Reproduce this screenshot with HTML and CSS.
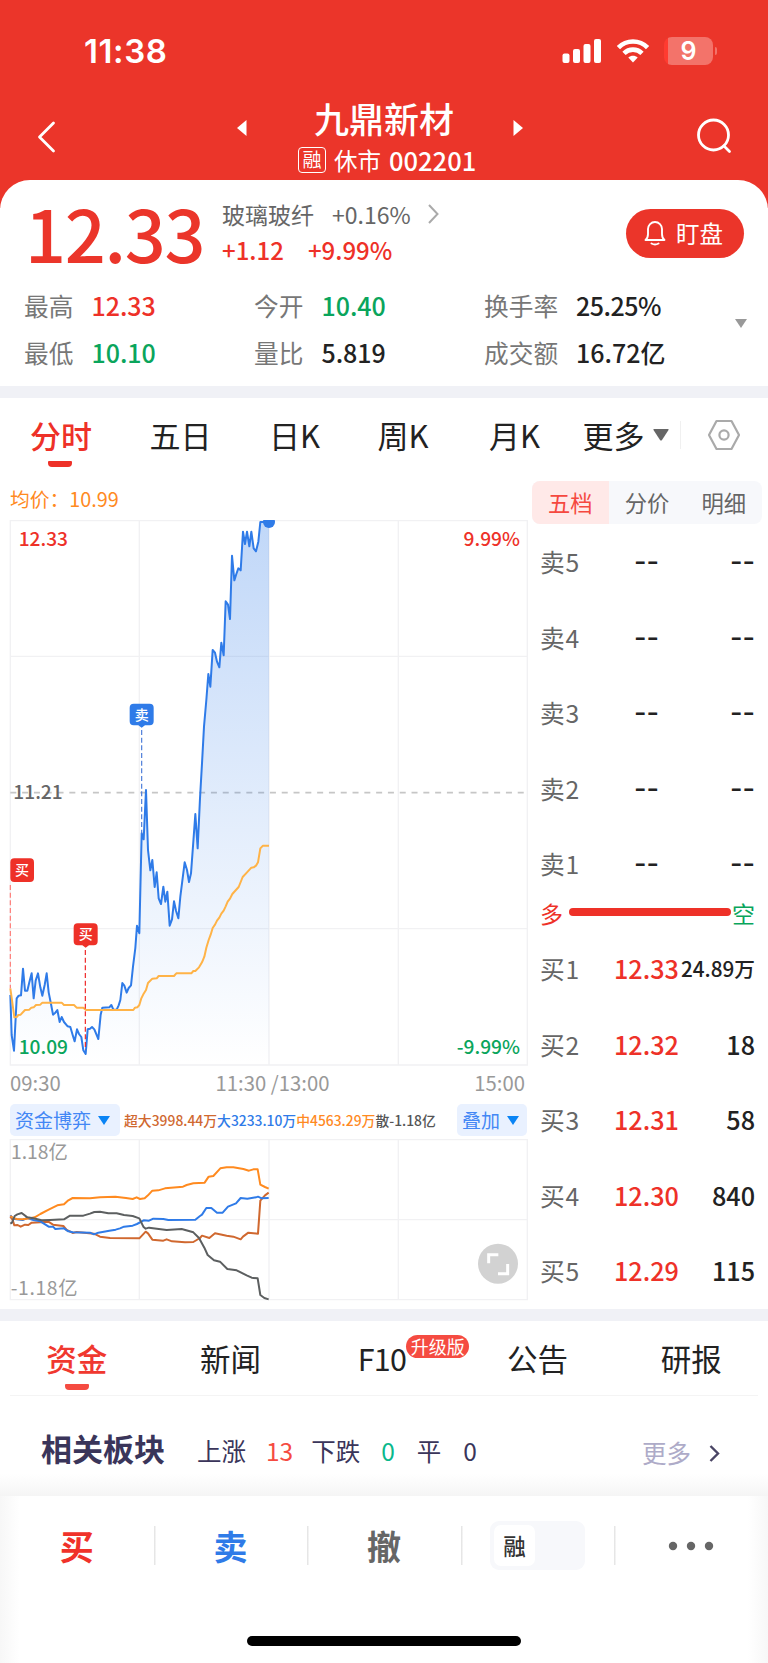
FILE: index.html
```html
<!DOCTYPE html>
<html lang="zh-CN">
<head>
  <meta charset="UTF-8">
  <meta name="viewport" content="width=device-width, initial-scale=1.0">
  <title>九鼎新材 002201</title>
  <link rel="stylesheet" href="styles.css">
</head>
<body>
  <header class="header">
    <div class="status">
      <span class="clock">11:38</span>
      <div class="status-icons">
        <svg width="40" height="26" viewBox="0 0 40 26" fill="#fff">
          <rect x="0.5" y="15.5" width="7" height="9.5" rx="2"/>
          <rect x="11" y="11" width="7" height="14" rx="2"/>
          <rect x="21.5" y="6" width="7" height="19" rx="2"/>
          <rect x="32" y="1" width="7" height="24" rx="2"/>
        </svg>
        <svg width="34" height="26" viewBox="0 0 34 26" fill="none" stroke="#fff" stroke-width="4.6">
          <path d="M2.4 9.6 C10.5 1.4 23.5 1.4 31.6 9.6"/>
          <path d="M8 15.4 C13 10.4 21 10.4 26 15.4"/>
          <path d="M17 24.5 L12.3 19.6 C15 17.2 19 17.2 21.7 19.6 Z" fill="#fff" stroke="none"/>
        </svg>
        <div class="battery">9</div>
      </div>
    </div>
    <div class="nav">
      <svg class="back" width="20" height="34" viewBox="0 0 20 34" fill="none" stroke="#fff" stroke-width="2.8" stroke-linecap="round" stroke-linejoin="round">
        <path d="M17.5 3 L3.5 17 L17.5 31"/>
      </svg>
      <svg class="prev" width="10" height="16" viewBox="0 0 10 16" fill="#fff"><path d="M9.5 0 V16 L0 8 Z"/></svg>
      <div class="title">
        <h1>九鼎新材</h1>
        <div class="subtitle"><span class="margin-tag">融</span><span class="market">休市</span><span class="code">002201</span></div>
      </div>
      <svg class="next" width="10" height="16" viewBox="0 0 10 16" fill="#fff"><path d="M0.5 0 V16 L10 8 Z"/></svg>
      <svg class="search" width="36" height="36" viewBox="0 0 36 36" fill="none" stroke="#fff" stroke-width="2.8" stroke-linecap="round">
        <circle cx="17.5" cy="17" r="15"/>
        <path d="M28 28 L33.5 33.5"/>
      </svg>
    </div>
  </header>

  <section class="quote">
    <div class="quote-top">
      <div class="price">12.33</div>
      <div class="change">
        <div class="sector">
          <span class="sector-name">玻璃玻纤</span><span class="sector-pct">+0.16%</span>
          <svg width="11" height="20" viewBox="0 0 11 20" fill="none" stroke="#aaa" stroke-width="2"><path d="M1 1 L9.5 10 L1 19"/></svg>
        </div>
        <div class="diff"><span>+1.12</span><span>+9.99%</span></div>
      </div>
      <button class="watch">
        <svg width="22" height="26" viewBox="0 0 22 26" fill="none" stroke="#fff" stroke-width="1.9" stroke-linecap="round" stroke-linejoin="round">
          <path d="M1.5 20 C3.5 18.5 4 16.5 4 14 V9 A7 7 0 0 1 18 9 V14 C18 16.5 18.5 18.5 20.5 20 Z"/>
          <path d="M7.5 23.5 Q11 25.5 14.5 23.5"/>
        </svg>
        <span>盯盘</span>
      </button>
    </div>
    <div class="stats">
      <div class="stat"><label>最高</label><b class="up">12.33</b></div>
      <div class="stat"><label>今开</label><b class="down">10.40</b></div>
      <div class="stat"><label>换手率</label><b class="tight">25.25%</b></div>
      <div class="stat"><label>最低</label><b class="down">10.10</b></div>
      <div class="stat"><label>量比</label><b>5.819</b></div>
      <div class="stat"><label>成交额</label><b>16.72亿</b></div>
      <svg class="stats-more" width="12" height="9" viewBox="0 0 12 9" fill="#999"><path d="M0 0 H12 L6 9 Z"/></svg>
    </div>
  </section>

  <nav class="periods">
    <a class="active">分时</a>
    <a>五日</a>
    <a>日K</a>
    <a>周K</a>
    <a class="month">月K</a>
    <a class="more">更多<svg width="16" height="12" viewBox="0 0 16 12" fill="#666"><path d="M1 0 H15 Q16 0 15.5 1 L9 11 Q8 12 7 11 L0.5 1 Q0 0 1 0 Z"/></svg></a>
    <svg class="setting" width="34" height="32" viewBox="0 0 34 32" fill="none" stroke="#aaa" stroke-width="2.2" stroke-linejoin="round">
      <path d="M9.5 2 H24.5 L32 16 L24.5 30 H9.5 L2 16 Z"/>
      <circle cx="17" cy="16" r="4.6"/>
    </svg>
  </nav>

  <main class="market-view">
    <div class="charts">
      <div class="avg">均价：10.99</div>
      <svg class="price-chart" width="530" height="546" viewBox="0 0 1590 1638">
        <defs>
          <linearGradient id="area" x1="0" y1="0" x2="0" y2="1635" gradientUnits="userSpaceOnUse">
            <stop offset="0" stop-color="#2f7be8" stop-opacity="0.3"/>
            <stop offset="0.5" stop-color="#2f7be8" stop-opacity="0.15"/>
            <stop offset="1" stop-color="#2f7be8" stop-opacity="0"/>
          </linearGradient>
        </defs>
        <path class="grid" d="M31 2 H1582 V1635 H31 Z M31 409 H1582 M31 1226 H1582 M418 2 V1635 M807 2 V1635 M1195 2 V1635"/>
        <path class="mid" d="M31 818 H1580"/>
        <polygon fill="url(#area)" points="31,1635 31,1425 35,1545 42,1592 50,1435 56,1427 63,1426 69,1346 75,1412 82,1412 88,1387 95,1360 101,1435 107,1382 114,1360 121,1402 127,1427 134,1395 140,1360 146,1417 153,1452 159,1484 166,1478 172,1470 179,1506 185,1491 192,1506 203,1519 211,1521 218,1545 224,1564 231,1528 237,1542 244,1551 250,1591 257,1602 263,1528 270,1526 276,1521 283,1528 295,1557 302,1484 307,1463 328,1462 334,1455 340,1469 350,1469 356,1456 361,1440 367,1389 373,1397 380,1418 386,1404 393,1396 399,1340 406,1284 411,1217 418,1240 425,940 431,958 438,810 444,990 451,1051 457,1020 464,1101 470,1057 476,1135 483,1152 490,1100 496,1145 502,1115 509,1217 516,1198 522,1144 528,1172 535,1195 541,1130 554,1027 561,1050 567,1086 573,1060 580,965 586,882 593,985 600,835 606,730 612,620 619,540 625,462 631,500 638,390 645,398 651,425 658,442 664,368 671,406 677,244 684,254 690,297 696,107 703,181 709,162 715,145 722,151 729,35 735,72 741,35 748,79 754,35 761,85 768,94 775,65 781,6 807,6 807,1635"/>
        <polyline class="line price-line" points="31,1425 35,1545 42,1592 50,1435 56,1427 63,1426 69,1346 75,1412 82,1412 88,1387 95,1360 101,1435 107,1382 114,1360 121,1402 127,1427 134,1395 140,1360 146,1417 153,1452 159,1484 166,1478 172,1470 179,1506 185,1491 192,1506 203,1519 211,1521 218,1545 224,1564 231,1528 237,1542 244,1551 250,1591 257,1602 263,1528 270,1526 276,1521 283,1528 295,1557 302,1484 307,1463 328,1462 334,1455 340,1469 350,1469 356,1456 361,1440 367,1389 373,1397 380,1418 386,1404 393,1396 399,1340 406,1284 411,1217 418,1240 425,940 431,958 438,810 444,990 451,1051 457,1020 464,1101 470,1057 476,1135 483,1152 490,1100 496,1145 502,1115 509,1217 516,1198 522,1144 528,1172 535,1195 541,1130 554,1027 561,1050 567,1086 573,1060 580,965 586,882 593,985 600,835 606,730 612,620 619,540 625,462 631,500 638,390 645,398 651,425 658,442 664,368 671,406 677,244 684,254 690,297 696,107 703,181 709,162 715,145 722,151 729,35 735,72 741,35 748,79 754,35 761,85 768,94 775,65 781,6 807,6"/>
        <polyline class="line avg-line" points="31,1405 37,1448 43,1492 50,1491 55,1485 62,1484 75,1470 88,1469 94,1463 101,1462 108,1455 121,1454 127,1448 185,1448 192,1455 222,1455 230,1463 250,1463 258,1470 400,1470 405,1463 412,1462 418,1455 424,1435 431,1421 438,1410 444,1389 457,1376 470,1375 476,1368 522,1368 529,1360 574,1360 580,1353 586,1353 597,1342 606,1327 613,1310 619,1283 626,1260 632,1244 638,1224 645,1214 651,1202 658,1193 664,1181 671,1172 677,1159 683,1145 690,1136 697,1122 716,1101 728,1071 741,1057 754,1043 761,1042 768,1037 774,1027 781,985 789,977 807,977"/>
        <circle cx="807" cy="6" r="18" fill="#2f7be8"/>

        <!-- trade marks -->
        <path class="sell-dash" d="M425 630 V940"/>
        <path class="buy-dash faint" d="M31 1095 V1405"/>
        <path class="buy-dash" d="M256 1290 V1590"/>
        <path fill="#2f7be8" d="M401 551 H449 Q461 551 461 563 V604 Q461 616 449 616 H435 L425 623 L415 616 H401 Q389 616 389 604 V563 Q389 551 401 551 Z"/>
        <rect fill="#ee3128" x="31" y="1015" width="71" height="71" rx="12"/>
        <path fill="#ee3128" d="M233 1210 H281 Q293 1210 293 1222 V1264 Q293 1276 281 1276 H267 L257 1283 L247 1276 H233 Q221 1276 221 1264 V1222 Q221 1210 233 1210 Z"/>
        <text class="mark" x="425" y="599">卖</text>
        <text class="mark" x="66" y="1066">买</text>
        <text class="mark" x="257" y="1258">买</text>

        <text class="axis up" x="56" y="79">12.33</text>
        <text class="axis up end" x="1560" y="79">9.99%</text>
        <text class="axis" x="40" y="838">11.21</text>
        <text class="axis down" x="56" y="1602">10.09</text>
        <text class="axis down end" x="1560" y="1602">-9.99%</text>
      </svg>
      <div class="times"><span>09:30</span><span>11:30 /13:00</span><span>15:00</span></div>

      <div class="fund-bar">
        <span class="pill">资金博弈<i></i></span>
        <span class="fund-values"><em class="super">超大3998.44万</em><em class="big">大3233.10万</em><em class="mid-size">中4563.29万</em><em class="retail">散-1.18亿</em></span>
        <span class="pill overlay">叠加<i></i></span>
      </div>
      <svg class="fund-chart" width="530" height="162" viewBox="0 177 1590 486">
        <path class="grid" d="M31 179 H1582 V659 H31 Z M31 419 H1582 M418 179 V659 M807 179 V659 M1195 179 V659"/>
        <text class="fund-axis" x="33" y="236">1.18亿</text>
        <text class="fund-axis low" x="32" y="645">-1.18亿</text>
        <polyline class="line" stroke="#d0682f" points="31,410 38,420 43,436 53,435 62,440 75,434 85,435 95,428 121,427 145,425 159,434 190,438 200,450 211,455 218,459 230,456 282,461 300,470 330,474 418,475 437,455 444,460 457,479 490,482 500,478 516,484 555,487 580,486 600,474 606,467 628,474 645,460 680,467 700,470 722,478 729,470 745,458 774,461 781,362 795,346 806,338"/>
        <polyline class="line" stroke="#2f7be8" points="31,406 40,416 50,418 68,420 82,414 100,420 121,424 146,440 159,440 166,447 192,445 205,454 218,457 270,458 282,463 295,458 328,452 347,449 360,445 372,440 398,437 411,432 431,421 447,422 460,416 490,417 505,420 586,419 600,408 606,404 619,384 634,384 651,398 668,398 684,380 708,370 722,354 742,356 768,352 774,350 785,355 806,354"/>
        <polyline class="line" stroke="#ff8a1f" points="31,408 40,414 50,417 68,418 90,415 104,412 121,402 146,389 172,376 192,373 205,361 218,354 270,355 300,352 346,350 378,354 398,357 410,352 420,357 434,355 444,346 457,332 475,331 495,325 549,320 560,315 580,310 614,308 626,290 640,288 661,265 680,262 700,262 730,267 747,272 760,268 773,268 781,314 795,321 806,326"/>
        <polyline class="line" stroke="#5c5f60" points="31,431 36,428 44,408 52,403 65,399 82,412 100,415 125,421 150,420 192,418 210,407 250,407 270,401 283,396 300,395 325,400 350,400 372,405 398,408 418,415 430,440 437,446 447,443 500,450 545,447 580,457 597,474 613,503 623,525 642,541 660,545 682,567 710,571 740,586 755,593 773,595 781,645 793,654 806,658"/>
        <circle cx="1494" cy="551" r="60" fill="#d2d2d2"/>
        <path d="M1466 550 V524 H1495 M1523 552 V581 H1494" fill="none" stroke="#fff" stroke-width="9"/>
      </svg>
    </div>

    <aside class="book">
      <div class="book-tabs"><span class="active">五档</span><span>分价</span><span>明细</span></div>
      <div class="level sell"><span>卖5</span><b>--</b><b>--</b></div>
      <div class="level sell"><span>卖4</span><b>--</b><b>--</b></div>
      <div class="level sell"><span>卖3</span><b>--</b><b>--</b></div>
      <div class="level sell"><span>卖2</span><b>--</b><b>--</b></div>
      <div class="level sell"><span>卖1</span><b>--</b><b>--</b></div>
      <div class="ratio"><span class="up">多</span><i></i><span class="down">空</span></div>
      <div class="level"><span>买1</span><b class="up">12.33</b><b class="small">24.89万</b></div>
      <div class="level"><span>买2</span><b class="up">12.32</b><b>18</b></div>
      <div class="level"><span>买3</span><b class="up">12.31</b><b>58</b></div>
      <div class="level"><span>买4</span><b class="up">12.30</b><b>840</b></div>
      <div class="level"><span>买5</span><b class="up">12.29</b><b>115</b></div>
    </aside>
  </main>

  <nav class="info-tabs">
    <a class="active">资金</a>
    <a>新闻</a>
    <a class="f10">F10<span class="badge">升级版</span></a>
    <a>公告</a>
    <a>研报</a>
  </nav>

  <section class="related">
    <h2>相关板块</h2>
    <span>上涨</span><span class="n rise">13</span>
    <span>下跌</span><span class="n fall">0</span>
    <span>平</span><span class="n flat">0</span>
    <a>更多<svg width="11" height="17" viewBox="0 0 11 17" fill="none" stroke="#4a4565" stroke-width="2.4"><path d="M1.5 1 L9 8.5 L1.5 16"/></svg></a>
  </section>

  <footer class="trade">
    <div class="actions">
      <div class="action buy">买</div>
      <div class="action sell-btn">卖</div>
      <div class="action cancel">撤</div>
      <div class="action"><div class="switch"><span>融</span></div></div>
      <div class="action"><svg width="46" height="10" viewBox="0 0 46 10" fill="#666"><circle cx="5" cy="5" r="4.2"/><circle cx="23" cy="5" r="4.2"/><circle cx="41" cy="5" r="4.2"/></svg></div>
    </div>
    <div class="home-bar"></div>
  </footer>
</body>
</html>
```
FILE: styles.css
```css
* {
  box-sizing: border-box;
}

body {
  margin: 0;
  width: 768px;
  height: 1663px;
  overflow: hidden;
  background: #fff;
  color: #222;
  font-family: "Noto Sans CJK SC", sans-serif;
}

svg {
  display: block;
  flex: none;
}

i, em {
  font-style: normal;
}

b {
  font-weight: 500;
}

.up { color: #ee3128; fill: #ee3128; }
.down { color: #0aa55c; fill: #0aa55c; }

/* header */
.header {
  height: 208px;
  background: #eb352a;
  color: #fff;
}

.status {
  display: flex;
  justify-content: space-between;
  height: 90px;
  padding: 37px 55px 0 84px;
}

.clock {
  font: 600 33px/29px Inter, sans-serif;
  letter-spacing: 0.6px;
}

.status-icons {
  display: flex;
  height: 28px;
  align-items: center;
  gap: 14px;
}

.battery {
  position: relative;
  width: 49px;
  height: 28px;
  border-radius: 8px;
  background: linear-gradient(to right, #ff3b30 4px, #f3736a 4px);
  font: 600 25px/28px Inter, sans-serif;
  text-align: center;
}

.battery::after {
  content: "";
  position: absolute;
  left: 51px;
  top: 10px;
  width: 2px;
  height: 8px;
  border-radius: 0 4px 4px 0;
  background: #f3736a;
}

.nav {
  display: flex;
  align-items: flex-start;
}

.back { margin: 30px 0 0 36px; }
.prev { margin: 30px 0 0 181px; }
.title { width: 266px; }
.next { margin-top: 30px; }
.search { margin: 28px 0 0 173px; }

.title h1 {
  margin: 6px 0 0;
  padding-left: 8px;
  font-size: 35px;
  font-weight: 500;
  line-height: 44px;
  text-align: center;
}

.subtitle {
  display: flex;
  align-items: center;
  height: 26px;
  margin: 7px 0 0 51px;
}

.margin-tag {
  width: 28px;
  height: 26px;
  border: 1.5px solid #fff;
  border-radius: 4px;
  font-size: 19px;
  line-height: 22px;
  text-align: center;
}

.market {
  margin-left: 8px;
  font-size: 23.5px;
  line-height: 26px;
}

.code {
  margin-left: 8px;
  font-size: 25.5px;
  font-weight: 500;
  line-height: 26px;
}

/* quote */
.quote {
  position: relative;
  height: 206px;
  margin-top: -28px;
  border-radius: 30px 30px 0 0;
  background: #fff;
}

.quote-top {
  display: flex;
  align-items: flex-start;
  height: 107px;
}

.price {
  width: 222px;
  padding: 19px 0 0 25px;
  color: #eb352a;
  font-size: 72px;
  font-weight: 500;
  letter-spacing: -1.3px;
  line-height: 65px;
}

.change {
  width: 404px;
  padding-top: 19px;
}

.sector {
  display: flex;
  align-items: center;
  height: 30px;
  color: #666;
  font-size: 23px;
  line-height: 30px;
}

.sector-pct { margin: 0 17px 0 18px; }

.diff {
  margin-top: 5px;
  color: #ee3128;
  font-size: 24px;
  font-weight: 500;
  line-height: 32px;
}

.diff span + span { margin-left: 24px; }

.watch {
  display: flex;
  align-items: center;
  width: 118px;
  height: 49px;
  margin-top: 29px;
  padding: 0 0 0 18px;
  border: 0;
  border-radius: 25px;
  background: #eb352a;
  color: #fff;
  font: 23.5px/30px "Noto Sans CJK SC", sans-serif;
}

.watch svg { margin-top: -2px; }
.watch span { margin: -1px 0 0 10px; }

.stats {
  position: relative;
  display: grid;
  grid-template-columns: 230px 230px 260px;
  grid-auto-rows: 47px;
  padding-left: 24px;
}

.stat {
  display: flex;
  font-size: 24.7px;
  line-height: 36px;
}

.stat label { color: #777; }
.stat b { margin-left: 18px; font-size: 25px; }
.stat .tight { letter-spacing: -0.5px; }

.stats-more {
  position: absolute;
  left: 735px;
  top: 32px;
}

/* period tabs */
.periods {
  display: flex;
  align-items: center;
  height: 88px;
  padding: 10px 0 12px 30px;
  gap: 57.5px;
  border-top: 12px solid #f0f1f6;
  font-size: 31px;
  line-height: 44px;
  color: #222;
}

.periods a {
  position: relative;
}

.periods .active { color: #ee3128; font-weight: 500; }

.periods .active::after,
.info-tabs .active::after {
  content: "";
  position: absolute;
  left: 50%;
  width: 24px;
  height: 6px;
  margin-left: -12px;
  border-radius: 1px 1px 4px 4px;
  background: #ee3128;
}

.periods .active::after { top: 48px; margin-left: -13px; }
.periods .month { margin-left: 3px; }

.periods .more {
  display: flex;
  align-items: center;
  gap: 8px;
  margin-left: -15px;
  padding-right: 12px;
  background: linear-gradient(#f0f0f0, #f0f0f0) right center / 1px 28px no-repeat;
}

.setting { margin-left: -31px; }

/* charts */
.market-view {
  display: flex;
  height: 835px;
}

.charts { width: 530px; }

.avg {
  height: 46px;
  padding: 11px 0 0 10px;
  color: #ff8a1f;
  font-size: 19.8px;
  line-height: 28px;
}

.grid {
  fill: none;
  stroke: #f1f1f3;
  stroke-width: 4;
}

.mid {
  stroke: #c6c6c6;
  stroke-width: 5;
  stroke-dasharray: 18 17.4;
}

.line {
  fill: none;
  stroke-width: 6;
  stroke-linejoin: round;
}

.price-line { stroke: #2f7be8; }
.avg-line { stroke: #ffb347; }

.sell-dash,
.buy-dash {
  stroke: #4a7bd8;
  stroke-width: 3.5;
  stroke-dasharray: 15 8;
}

.buy-dash { stroke: #e22; }
.faint { stroke: #ff7a75; }

.mark {
  fill: #fff;
  font-size: 42px;
  font-weight: 500;
  text-anchor: middle;
}

.axis {
  font-size: 57.5px;
  font-weight: 500;
}

.axis:not(.up):not(.down) { fill: #666; }
.end { text-anchor: end; }

.times {
  display: flex;
  justify-content: space-between;
  height: 38px;
  padding: 1px 5px 0 10px;
  color: #999;
  font-size: 20.3px;
  line-height: 30px;
}

.times span:nth-child(2) { padding-left: 10px; }

.fund-bar {
  display: flex;
  align-items: center;
  height: 32px;
  padding-left: 10px;
}

.pill {
  display: flex;
  align-items: center;
  height: 32px;
  padding: 0 10px 0 5px;
  border-radius: 5px;
  background: #e9f1ff;
  color: #4387f5;
  font-size: 19px;
  line-height: 30px;
}

.pill i {
  margin-left: 7px;
  border: 6.5px solid transparent;
  border-top: 9px solid #0a84f5;
  border-bottom: 0;
}

.overlay { padding-right: 8px; }

.fund-values {
  width: 337px;
  padding-left: 4px;
  font-size: 13.85px;
  font-weight: 500;
  white-space: nowrap;
}

.super { color: #d0682f; }
.big { color: #2f7be8; }
.mid-size { color: #ff8a1f; }
.retail { color: #555; }

.fund-chart { margin-top: 3px; }

.fund-axis {
  fill: #999;
  font-size: 58px;
}

.low { letter-spacing: 2px; }

/* order book */
.book {
  width: 238px;
  padding: 7px 6px 0 2px;
}

.book-tabs {
  display: flex;
  height: 43px;
  overflow: hidden;
  border-radius: 8px;
  background: #f7f8fb;
  color: #666;
  font-size: 22.3px;
  line-height: 42px;
  text-align: center;
}

.book-tabs span { flex: 1; }

.book-tabs .active {
  background: #ffe9e8;
  color: #f5483f;
}

.level {
  display: grid;
  grid-template-columns: 74px 65px 76px;
  height: 75.6px;
  padding-left: 8px;
  font-size: 25.2px;
  line-height: 74px;
}

.level span {
  color: #666;
  font-size: 24.7px;
  letter-spacing: 0.9px;
}

.level b:last-child { text-align: right; }
.level .small { font-size: 20.7px; margin-left: -9px; }

.sell b {
  font-family: Inter, sans-serif;
  font-size: 27px;
  line-height: 75px;
  text-align: center;
}

.ratio {
  display: flex;
  align-items: center;
  height: 29px;
  padding: 0 7px 7px 8px;
  font-size: 23px;
}

.ratio span { line-height: 22px; }

.ratio i {
  flex: 1;
  height: 8px;
  margin: -1px 1px 0 6px;
  border-radius: 4px;
  background: #ee3128;
}

/* info tabs */
.info-tabs {
  display: flex;
  height: 87px;
  border-top: 12px solid #f0f1f6;
  font-size: 30.5px;
  line-height: 74px;
  text-align: center;
  background: linear-gradient(#f4f4f4, #f4f4f4) 10px 100% / 748px 1.5px no-repeat;
}

.info-tabs a {
  position: relative;
  flex: 0 0 153.6px;
}

.info-tabs .active { color: #f0382f; font-weight: 500; }
.info-tabs .active::after { top: 63px; background: #f54b41; }

.info-tabs .f10 {
  padding-right: 4px;
  letter-spacing: -0.8px;
}

.badge {
  position: absolute;
  left: 99px;
  top: 14px;
  width: 63px;
  height: 23px;
  border-radius: 12px;
  background: #f54b41;
  color: #fff;
  font-size: 18px;
  letter-spacing: 0;
  line-height: 22px;
}

/* related */
.related {
  display: flex;
  height: 100px;
  padding: 33px 0 0 41px;
  color: #3a355a;
  font-size: 24.5px;
  line-height: 44px;
  background: linear-gradient(rgba(0, 0, 0, 0), #f5f5f5) 0 100% / 100% 22px no-repeat;
}

.related h2 {
  margin: -3px 15px 0 0;
  font-size: 31px;
  font-weight: 700;
  line-height: 44px;
}

.related span { margin-left: 17px; }
.related .n { margin: 0 5px 0 21px; }
.related .rise { margin: 0 1px 0 20px; }
.related .flat { margin-left: 22px; }
.rise { color: #f54b41; }
.fall { color: #0ab88c; }

.related a {
  display: flex;
  align-items: center;
  height: 48px;
  margin: 0 48px 0 auto;
  color: #aeabc8;
}

.related a svg { margin-left: 18px; }

/* trade bar */
.trade {
  height: 168px;
  padding-top: 25px;
  background:
    linear-gradient(to right, #f7f7f7, #fff) left / 20px 100% no-repeat,
    linear-gradient(to left, #f7f7f7, #fff) right / 20px 100% no-repeat,
    #fff;
}

.actions {
  display: flex;
  height: 49px;
}

.action {
  display: flex;
  flex: 1;
  align-items: center;
  justify-content: center;
  font-size: 34px;
  font-weight: 700;
  line-height: 49px;
}

.action + .action {
  background: linear-gradient(#e6e6e6, #e6e6e6) 0 center / 1.5px 39px no-repeat;
}

.buy { color: #f0322a; }
.sell-btn { color: #2f7be8; }
.cancel { color: #666; }

.switch {
  width: 95px;
  height: 49px;
  padding: 4px;
  border-radius: 9px;
  background: #f7f8fb;
}

.switch span {
  display: block;
  width: 41px;
  height: 41px;
  border-radius: 7px;
  background: #fff;
  color: #333;
  font-size: 22.5px;
  font-weight: 500;
  line-height: 40px;
  text-align: center;
}

.home-bar {
  width: 274px;
  height: 10px;
  margin: 66px 0 0 247px;
  border-radius: 5px;
  background: #000;
}
```
